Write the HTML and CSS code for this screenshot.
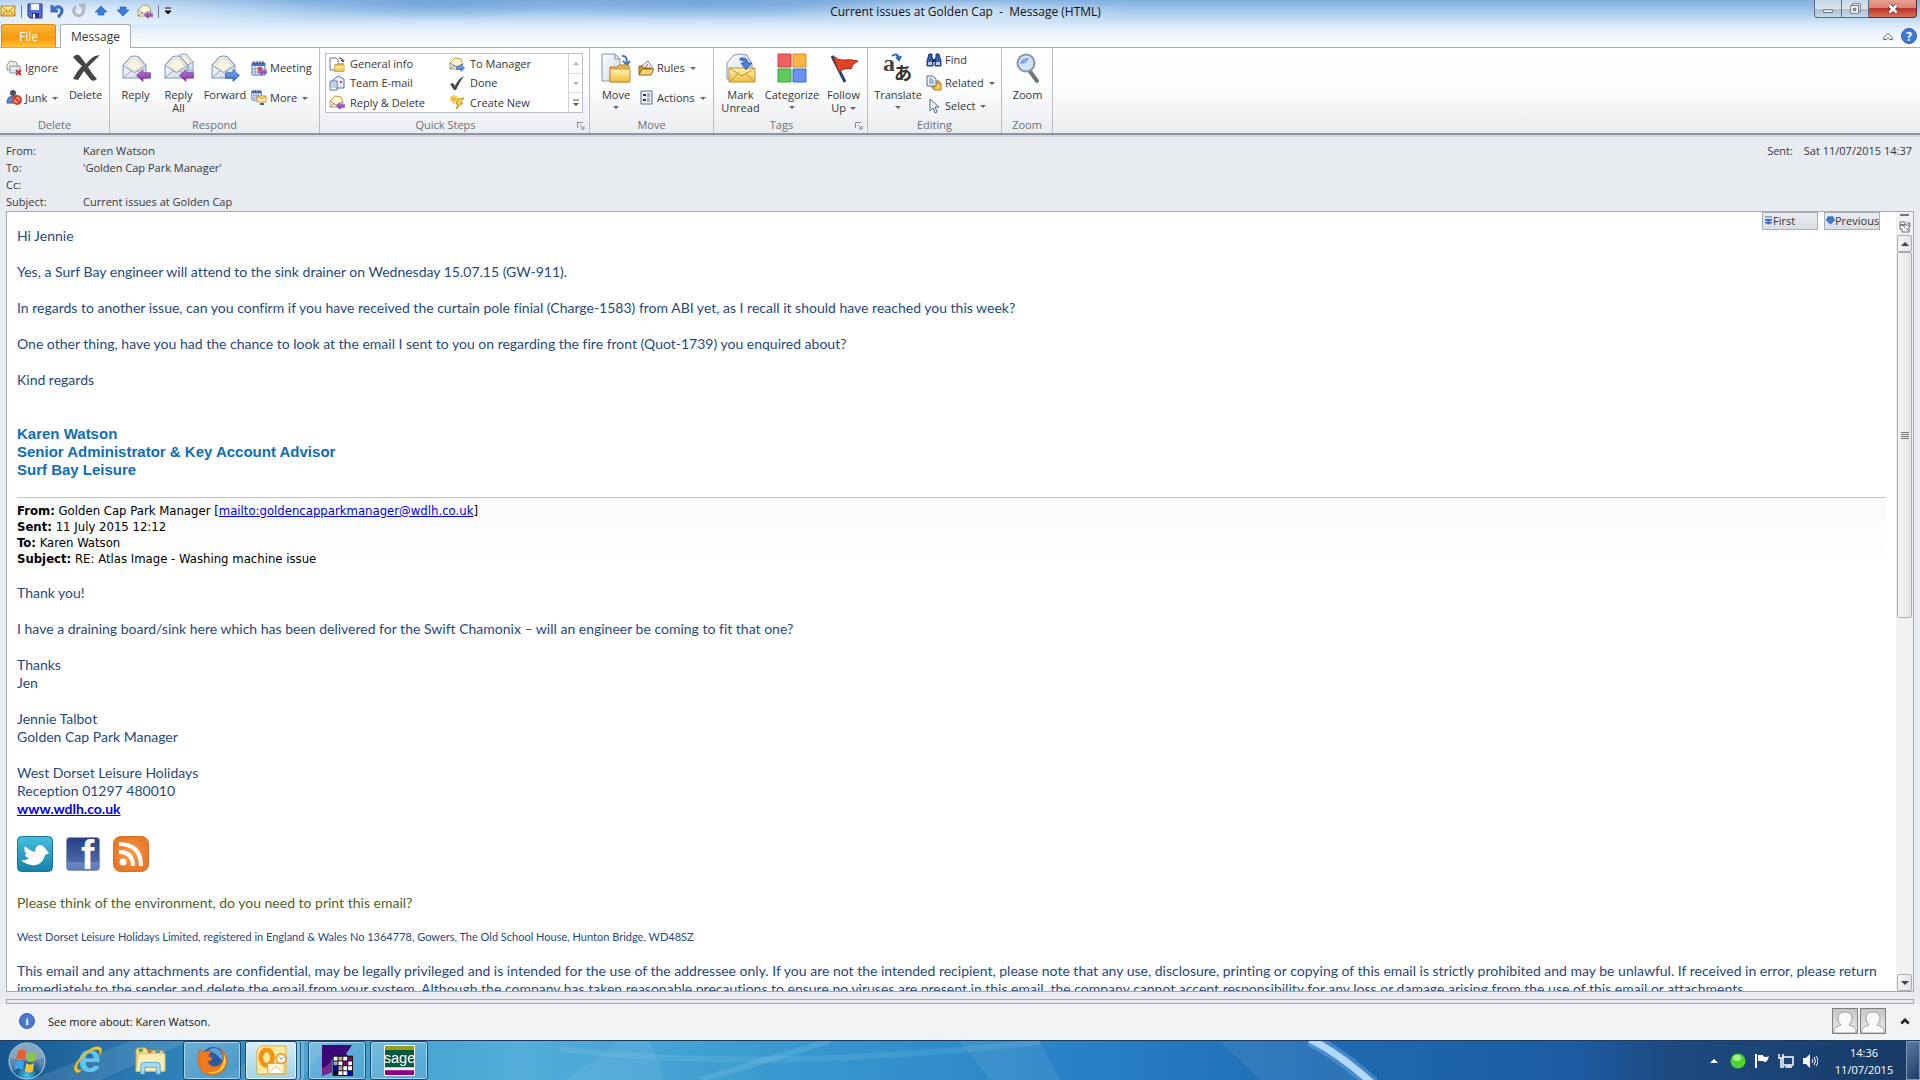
FILE: index.html
```html
<!DOCTYPE html>
<html lang="en">
    <head>
        <meta charset="UTF-8" />
        <title>Current issues at Golden Cap - Message (HTML)</title>
        <link rel="stylesheet" href="styles.css">
    </head>
    <body>
        <svg class="sprite" aria-hidden="true">
            <defs>
                <linearGradient id="g-gold" x1="0" y1="0" x2="0" y2="1">
                    <stop offset="0" stop-color="#fff3b0" />
                    <stop offset="1" stop-color="#f0bc3c" />
                </linearGradient>
                <linearGradient id="g-paper" x1="0" y1="0" x2="1" y2="1">
                    <stop offset="0" stop-color="#ffffff" />
                    <stop offset="1" stop-color="#c9d6ea" />
                </linearGradient>
                <linearGradient id="g-purple" x1="0" y1="0" x2="0" y2="1">
                    <stop offset="0" stop-color="#c77be0" />
                    <stop offset="1" stop-color="#7d2aa3" />
                </linearGradient>
                <linearGradient id="g-blue" x1="0" y1="0" x2="0" y2="1">
                    <stop offset="0" stop-color="#8dbcf7" />
                    <stop offset="1" stop-color="#2b5fc4" />
                </linearGradient>
            </defs>
            <symbol id="open-envelope" viewBox="0 0 24 24">
                <path d="M1 10 8 2q4-2 8 0l7 8v12H1z" fill="url(#g-paper)" stroke="#8494ae" />
                <path d="M4 11 9 4q3-1 6 0l5 7-8 5z" fill="#f7f3df" stroke="#c8c6b4" stroke-width=".6" />
                <path d="m1 10 11 7 11-7M1 22l8-7m14 7-8-7" fill="none" stroke="#8494ae" stroke-width=".8" />
            </symbol>
            <symbol id="arrow-left" viewBox="0 0 14 12">
                <path d="M.5 6 6.500.5V3.500h7v5h-7v3z" fill="url(#g-purple)" stroke="#7b3a9c" stroke-width=".7" />
            </symbol>
            <symbol id="arrow-right" viewBox="0 0 14 12">
                <path d="M13.500 6 7.500.5V3.500h-7v5h7v3z" fill="url(#g-blue)" stroke="#2c559e" stroke-width=".7" />
            </symbol>
            <symbol id="folder" viewBox="0 0 22 19">
                <path d="M1 18V3h7l2-2h10v17z" fill="#e8b24b" stroke="#b98428" />
                <path d="M1 5h20v13H1z" fill="url(#g-gold)" stroke="#c4913a" />
            </symbol>
            <symbol id="i-reply-small" viewBox="0 0 16 16">
                <path d="m1 7 5-5 6 1 2 5-1 5H1z" fill="#fff6d4" stroke="#c29a3c" />
                <path d="m1 7 6 4 7-3M1 13l5-4" fill="none" stroke="#7d8db5" />
                <use href="#arrow-left" x="7" y="8" width="9" height="8" />
            </symbol>
            <symbol id="i-calendar" viewBox="0 0 16 16">
                <path d="M1 3h13v12H1z" fill="#fff" stroke="#4d6cae" />
                <path d="M1 3h13v3H1z" fill="#4a71c4" />
                <path d="M4 6v9m3-9v9m3-9v9M1 9h13M1 12h13" stroke="#7890c4" />
                <path d="M3 1v3m3-3v3m3-3v3m3-3v3" stroke="#223f82" />
            </symbol>
            <symbol id="i-person" viewBox="0 0 24 24">
                <path d="M1 24v-3q0-3 7-5-4-4-3-8 1-5 7-5t7 5q1 4-3 8 7 2 7 5v3z" fill="#fafafa" stroke="#a0a0a0" />
            </symbol>
        </svg>

        <header class="titlebar">
            <div class="quick-access">
                <svg viewBox="0 0 16 16"><path d="M1 3h14v10H1z" fill="url(#g-gold)" stroke="#b98a20" /><path d="m1 3 7 6 7-6M1 13l5-5m9 5-5-5" fill="none" stroke="#b98a20" /></svg>
                <span class="divider"></span>
                <button aria-label="Save"><svg viewBox="0 0 16 16"><path d="M1 1h14v14H3l-2-2z" fill="#5b6fd0" stroke="#26358c" /><path d="M4 1h8v6H4z" fill="#f4f7ff" /><path d="M5 10h7v5H5z" fill="#26358c" /><path d="M6 11h2v4H6z" fill="#fff" /></svg></button>
                <button aria-label="Undo"><svg viewBox="0 0 16 16"><path d="M3 2v6h6M4 7q4-5 8-2 3 4-3 9" fill="none" stroke="#3e6dc6" stroke-width="3" /></svg></button>
                <button aria-label="Redo"><svg viewBox="0 0 16 16"><path d="M5 3q-4 4-1 8 5 4 8-1 1-4-1-7M8 2h5v5" fill="none" stroke="#b4b8bf" stroke-width="3" /></svg></button>
                <button aria-label="Previous item"><svg viewBox="0 0 16 16"><path d="m8 3 6 6h-3v3H5V9H2z" fill="#3b7be0" stroke="#2458b4" stroke-width=".6" /></svg></button>
                <button aria-label="Next item"><svg viewBox="0 0 16 16"><path d="m8 13 6-6h-3V4H5v3H2z" fill="#3b7be0" stroke="#2458b4" stroke-width=".6" /></svg></button>
                <button aria-label="Reply and delete"><svg viewBox="0 0 16 16"><use href="#i-reply-small" /></svg></button>
                <span class="divider"></span>
                <button class="customise" aria-label="Customise"><svg viewBox="0 0 8 8"><path d="M1 1h6M1 4h6L4 7z" stroke="#111" /></svg></button>
            </div>
            <h1>Current issues at Golden Cap&nbsp; -&nbsp; Message (HTML)</h1>
            <div class="window-buttons">
                <button aria-label="Minimise"><svg viewBox="0 0 16 16"><path d="M3 9h10v3H3z" fill="#fff" stroke="#5a6577" /></svg></button>
                <button aria-label="Restore"><svg viewBox="0 0 16 16"><path d="M5 2h9v9H5z" fill="#fff" stroke="#5a6577" /><path d="M3 4h9v9H3z" fill="#fff" stroke="#5a6577" /><path d="M6 7h3v3H6z" fill="#9cabc0" stroke="#5a6577" /></svg></button>
                <button class="close" aria-label="Close"><svg viewBox="0 0 16 16"><path d="m4 4 8 8m0-8-8 8" stroke="#5b3a3e" stroke-width="5" /><path d="m4 4 8 8m0-8-8 8" stroke="#fff" stroke-width="3" /></svg></button>
            </div>
        </header>

        <nav class="tabs">
            <button class="tab tab-file">File</button>
            <button class="tab tab-active">Message</button>
            <span class="tab-tools">
                <button aria-label="Minimise the ribbon"><svg viewBox="0 0 16 16"><path d="m3 10 5-5 5 5v2h-3L8 10l-2 2H3z" fill="#fff" stroke="#444b57" /></svg></button>
                <button aria-label="Help"><svg viewBox="0 0 16 16"><circle cx="8" cy="8" r="7.500" fill="#4079d4" stroke="#2a5db4" /><text x="8" y="12.500" class="help-mark">?</text></svg></button>
            </span>
        </nav>

        <section class="ribbon">
            <div class="group group-delete">
                <div class="tools">
                    <div class="stack">
                        <button class="small"><svg viewBox="0 0 16 16"><path d="M1 5 4 1l6 1 2 4v4H1z" fill="#f5efcf" stroke="#8a93a5" /><path d="M4 6h10v7H4z" fill="#dfe7f2" stroke="#8a93a5" /><path d="m10 10 5 5m0-5-5 5" stroke="#dc3027" stroke-width="2" /></svg>Ignore</button>
                        <button class="small"><svg viewBox="0 0 16 16"><circle cx="7" cy="4" r="3" fill="#4d5260" /><path d="M1 14q0-7 6-7t5 7z" fill="#5b88d4" stroke="#34599c" /><circle cx="11" cy="11" r="4" fill="#f0a090" stroke="#d63b20" stroke-width="2" /><path d="m8 8 6 6" stroke="#d63b20" stroke-width="2" /></svg>Junk<i class="caret"></i></button>
                    </div>
                    <button class="big"><svg viewBox="0 0 30 30"><path d="M2 4q4-4 7-1l6 8q5-6 9-8l5-1q-6 6-12 12 4 7 9 12-3 3-6 1l-7-9q-4 6-6 9l-5-1q4-8 9-13Q6 9 2 4z" fill="#454545" /></svg>Delete</button>
                </div>
                <h2>Delete</h2>
            </div>

            <div class="group group-respond">
                <div class="tools">
                    <button class="big"><svg viewBox="0 0 30 30"><use href="#open-envelope" x="1" y="2" width="25" height="25" /><use href="#arrow-left" x="15" y="16" width="15" height="13" /></svg>Reply</button>
                    <button class="big"><svg viewBox="0 0 30 30"><use href="#open-envelope" x="9" y="0" width="21" height="21" /><use href="#open-envelope" x="0" y="2" width="25" height="25" /><use href="#arrow-left" x="15" y="16" width="15" height="13" /></svg>Reply<br>All</button>
                    <button class="big forward"><svg viewBox="0 0 30 30"><use href="#open-envelope" x="1" y="2" width="25" height="25" /><use href="#arrow-right" x="15" y="16" width="15" height="13" /></svg>Forward</button>
                    <div class="stack">
                        <button class="small"><svg viewBox="0 0 16 16"><use href="#i-calendar" /><path d="M7 7h4v4H7z" fill="#e04545" /><use href="#arrow-left" x="7" y="8" width="9" height="8" /></svg>Meeting</button>
                        <button class="small"><svg viewBox="0 0 16 16"><use href="#i-calendar" width="12" height="12" /><path d="M6 7h9v6H6z" fill="#ffe9a0" stroke="#c29a3c" /><path d="m6 7 5 3 4-3" fill="none" stroke="#c29a3c" /><path d="M9 15h4" stroke="#2b5fc4" stroke-width="2" /></svg>More<i class="caret"></i></button>
                    </div>
                </div>
                <h2>Respond</h2>
            </div>

            <div class="group group-steps">
                <div class="gallery">
                    <div class="gallery-list">
                        <button class="small"><svg viewBox="0 0 16 16"><path d="M1 2h6l2 2v10H1z" fill="#fff" stroke="#64748f" /><path d="M10 2q4 0 4 3m-2-1 2 2 1-2" fill="none" stroke="#333" /><use href="#folder" x="5" y="7" width="11" height="9" /></svg>General info</button>
                        <button class="small"><svg viewBox="0 0 16 16"><path d="m1 7 5-5 6 1 2 5-1 5H1z" fill="#fff6d4" stroke="#c29a3c" /><path d="m1 7 6 4 7-3M1 13l5-4" fill="none" stroke="#5f7fc4" /><use href="#arrow-right" x="7" y="8" width="9" height="8" /></svg>To Manager</button>
                        <button class="small"><svg viewBox="0 0 16 16"><path d="m4 5 5-4 6 3v9H4z" fill="#e3ecf8" stroke="#51709f" /><path d="M1 6h7v9H1z" fill="#fff" stroke="#51709f" /><path d="M2 8h5M2 10h5M2 12h5" stroke="#8aa3cc" /><path d="M11 6h2v2h-2z" fill="#d33" /></svg>Team E-mail</button>
                        <button class="small"><svg viewBox="0 0 16 16"><path d="m1 9 3-1 2 3q3-7 9-10-5 7-8 14H5z" fill="#484848" /></svg>Done</button>
                        <button class="small"><svg viewBox="0 0 16 16"><use href="#i-reply-small" /></svg>Reply &amp; Delete</button>
                        <button class="small"><svg viewBox="0 0 16 16"><path d="M5 1v9M1 5h9M2 2l6 6m0-6L2 8" stroke="#f0bd2c" stroke-width="1.500" /><path d="m9 5 6-1-4 5h3l-7 6 2-5H7z" fill="#ffd34a" stroke="#a8781a" stroke-width=".7" /></svg>Create New</button>
                    </div>
                    <div class="gallery-scroll">
                        <button class="off" aria-label="Scroll up"><i class="caret up"></i></button>
                        <button class="off" aria-label="Scroll down"><i class="caret"></i></button>
                        <button aria-label="More quick steps"><svg viewBox="0 0 8 8"><path d="M1 1h6" stroke="#555" /><path d="M1 4h6L4 7z" fill="#555" /></svg></button>
                    </div>
                </div>
                <h2>Quick Steps</h2>
                <button class="launcher" aria-label="Quick Steps options"><svg viewBox="0 0 8 8"><path d="M.5 6V.5H6M3 3l4 4m0-3v3H4" fill="none" stroke="#858b94" /></svg></button>
            </div>

            <div class="group group-move">
                <div class="tools">
                    <button class="big"><svg viewBox="0 0 30 30"><path d="M1 1h13l5 5v22H1z" fill="url(#g-paper)" stroke="#8494ae" /><path d="M14 1v5h5" fill="none" stroke="#8494ae" /><path d="M21 3q5-1 5 7m-4-2 4 4 3-4" fill="none" stroke="#3e6fca" stroke-width="2" /><use href="#folder" x="8" y="11" width="22" height="19" /></svg>Move<i class="caret"></i></button>
                    <div class="stack">
                        <button class="small"><svg viewBox="0 0 16 16"><path d="m4 6 6-5 4 6v5H4z" fill="#eef1f8" stroke="#7683a0" /><path d="m7 8 3-4" stroke="#d33" /><path d="M1 6h3l1 2h8v6H1z" fill="#d99c2a" stroke="#8d6212" /><path d="m4 9h12l-3 6H1z" fill="#ffd670" stroke="#8d6212" /></svg>Rules<i class="caret"></i></button>
                        <button class="small"><svg viewBox="0 0 16 16"><path d="M3 2h11v13H3z" fill="#eef3fb" stroke="#5a6d8f" /><path d="M5 5h3v2H5zm0 5h3v2H5z" fill="#333" /><path d="M9 5h3M9 7h3M9 10h3M9 12h3" stroke="#5a6d8f" /></svg>Actions<i class="caret"></i></button>
                    </div>
                </div>
                <h2>Move</h2>
            </div>

            <div class="group group-tags">
                <div class="tools">
                    <button class="big"><svg viewBox="0 0 30 30"><path d="M1 10 8 2q7-2 13 0l5 9v15H1z" fill="url(#g-paper)" stroke="#8494ae" /><path d="M3 15h26v14H3z" fill="url(#g-gold)" stroke="#c09334" /><path d="m3 15 13 8 13-8M3 29l9-8m17 8-9-8" fill="none" stroke="#c09334" /><path d="M14 5q8-1 8 5h4l-6 7-5-7h3q0-3-4-3z" fill="#4a7ede" stroke="#2c559e" stroke-width=".7" /></svg>Mark<br>Unread</button>
                    <button class="big categorize"><svg viewBox="0 0 30 30"><path d="M1 1h13v13H1z" fill="#ef6164" stroke="#c94145" /><path d="M16 1h13v13H16z" fill="#fbb546" stroke="#d48c22" /><path d="M1 16h13v13H1z" fill="#5fcb5b" stroke="#3ba03a" /><path d="M16 16h13v13H16z" fill="#6a92f2" stroke="#4369c8" /></svg>Categorize<i class="caret"></i></button>
                    <button class="big"><svg viewBox="0 0 30 30"><path d="m3 3 13 26" stroke="#23407c" stroke-width="3" /><path d="M4 3q6 5 11 4 6-1 14 1-6 3-7 8-6-2-12 3z" fill="#e24325" stroke="#a82a14" /></svg>Follow<span>Up<i class="caret"></i></span></button>
                </div>
                <h2>Tags</h2>
                <button class="launcher" aria-label="Tag options"><svg viewBox="0 0 8 8"><path d="M.5 6V.5H6M3 3l4 4m0-3v3H4" fill="none" stroke="#858b94" /></svg></button>
            </div>

            <div class="group group-editing">
                <div class="tools">
                    <button class="big"><svg viewBox="0 0 30 30"><text x="0" y="18" class="glyph-latin">a</text><text x="11" y="27" class="glyph-kana">あ</text><path d="M9 3q5-4 7 2m-3-1 3 3 2-4" fill="none" stroke="#3566c4" stroke-width="2" /></svg>Translate<i class="caret"></i></button>
                    <div class="stack">
                        <button class="small"><svg viewBox="0 0 16 16"><path d="M3 2h3v3l1 2v7H1V9zm7 0h3l2 7v5H9V7l1-2z" fill="#345ca8" stroke="#1d3870" /><path d="M2 10h4v3H2zm8 0h4v3h-4z" fill="#b9cdf0" /><path d="M6 7h4v3H6z" fill="#1d3870" /></svg>Find</button>
                        <button class="small"><svg viewBox="0 0 16 16"><path d="M6 6h7v7H6z" fill="#ffe08a" stroke="#a8781a" /><path d="M8 8h7v7H8z" fill="#ffc94a" stroke="#a8781a" /><path d="M1 1h6l3 3v7H1z" fill="#eef3fb" stroke="#5a6d8f" /><path d="M3 4h4M3 6h5M3 8h5" stroke="#5a7cc0" /></svg>Related<i class="caret"></i></button>
                        <button class="small"><svg viewBox="0 0 16 16"><path d="M4 1v12l3-3 2 5 2-1-2-5h4z" fill="#f5f8fd" stroke="#50648c" /></svg>Select<i class="caret"></i></button>
                    </div>
                </div>
                <h2>Editing</h2>
            </div>

            <div class="group group-zoom">
                <div class="tools">
                    <button class="big"><svg viewBox="0 0 30 30"><path d="m16 17 8 11" stroke="#777" stroke-width="4" stroke-linecap="round" /><circle cx="13" cy="10" r="8.500" fill="#cfe2f8" stroke="#8b97a8" stroke-width="2" /><path d="M7 11q1-7 9-6-2 6-9 6z" fill="#7fabe4" /></svg>Zoom</button>
                </div>
                <h2>Zoom</h2>
            </div>
        </section>

        <section class="envelope">
            <dl>
                <dt>From:</dt><dd>Karen Watson</dd>
                <dt>To:</dt><dd>'Golden Cap Park Manager'</dd>
                <dt>Cc:</dt><dd></dd>
                <dt>Subject:</dt><dd>Current issues at Golden Cap</dd>
            </dl>
            <p class="sent"><span>Sent:</span> Sat 11/07/2015 14:37</p>
        </section>

        <main class="message">
            <article class="mail">
                <p>Hi Jennie</p>
                <p>Yes, a Surf Bay engineer will attend to the sink drainer on Wednesday 15.07.15 (GW-911).</p>
                <p>In regards to another issue, can you confirm if you have received the curtain pole finial (Charge-1583) from ABI yet, as I recall it should have reached you this week?</p>
                <p>One other thing, have you had the chance to look at the email I sent to you on regarding the fire front (Quot-1739) you enquired about?</p>
                <p>Kind regards</p>
                <p class="signature">Karen Watson<br>Senior Administrator &amp; Key Account Advisor<br>Surf Bay Leisure</p>

                <div class="quoted-header">
                    <b>From:</b> Golden Cap Park Manager [<a href="mailto:goldencapparkmanager@wdlh.co.uk">mailto:goldencapparkmanager@wdlh.co.uk</a>]<br>
                    <b>Sent:</b> 11 July 2015 12:12<br>
                    <b>To:</b> Karen Watson<br>
                    <b>Subject:</b> RE: Atlas Image - Washing machine issue
                </div>

                <p>Thank you!</p>
                <p>I have a draining board/sink here which has been delivered for the Swift Chamonix – will an engineer be coming to fit that one?</p>
                <p>Thanks<br>Jen</p>
                <p>Jennie Talbot<br>Golden Cap Park Manager</p>
                <p>West Dorset Leisure Holidays<br>Reception 01297 480010<br><a class="site" href="http://www.wdlh.co.uk">www.wdlh.co.uk</a></p>

                <div class="social">
                    <a href="#twitter" aria-label="Twitter"><svg viewBox="0 0 36 36">
                        <defs><linearGradient id="g-tw" x1="0" y1="0" x2="0" y2="1"><stop offset="0" stop-color="#45bede" /><stop offset="1" stop-color="#1781ab" /></linearGradient></defs>
                        <rect x=".5" y=".5" width="35" height="35" rx="4" fill="url(#g-tw)" stroke="#1b7697" />
                        <path d="M4 24q5 1 8-2-4-1-4-4h2q-4-3-2-8 5 5 10 6 0-6 5-7 3 0 5 3l3 4 1 1-4 2q-2 8-9 10-9 1-15-5z" fill="#fff" />
                    </svg></a>
                    <a href="#facebook" aria-label="Facebook"><svg viewBox="0 0 36 36">
                        <defs><linearGradient id="g-fb" x1="0" y1="0" x2="0" y2="1"><stop offset="0" stop-color="#243f80" /><stop offset=".75" stop-color="#4a6bab" /><stop offset=".76" stop-color="#6b89c0" /><stop offset="1" stop-color="#5878b4" /></linearGradient></defs>
                        <rect x="1.500" y="1.500" width="33" height="33" rx="3" fill="url(#g-fb)" stroke="#8b9bbd" />
                        <text x="16" y="33" class="fb-mark">f</text>
                    </svg></a>
                    <a href="#rss" aria-label="RSS"><svg viewBox="0 0 36 36">
                        <defs><radialGradient id="g-rss"><stop offset="0" stop-color="#f9a248" /><stop offset="1" stop-color="#e8772a" /></radialGradient></defs>
                        <rect x=".5" y=".5" width="35" height="35" rx="7" fill="url(#g-rss)" stroke="#d8702a" />
                        <circle cx="10" cy="26" r="3.500" fill="#fff" />
                        <path d="M6 16q14 0 14 14M6 8q22 0 22 22" fill="none" stroke="#fff" stroke-width="4" />
                    </svg></a>
                </div>

                <p class="green">Please think of the environment, do you need to print this email?</p>
                <p class="company">West Dorset Leisure Holidays Limited, registered in England &amp; Wales No 1364778, Gowers, The Old School House, Hunton Bridge, WD48SZ</p>
                <p>This email and any attachments are confidential, may be legally privileged and is intended for the use of the addressee only. If you are not the intended recipient, please note that any use, disclosure, printing or copying of this email is strictly prohibited and may be unlawful. If received in error, please return immediately to the sender and delete the email from your system. Although the company has taken reasonable precautions to ensure no viruses are present in this email, the company cannot accept responsibility for any loss or damage arising from the use of this email or attachments.</p>
            </article>
            <div class="jump">
                <button><svg viewBox="0 0 10 10"><path d="M1 1h8M1 4h8L5 6zM1 7h8L5 9z" fill="#3566c4" stroke="#3566c4" /></svg>First</button>
                <button><svg viewBox="0 0 10 10"><path d="M0 4h2V1h6v3h2L5 9z" fill="#3b78dc" stroke="#2a5db4" /></svg>Previous</button>
            </div>
            <div class="scrollbar">
                <span class="split"></span>
                <svg class="page-mark" viewBox="0 0 14 14"><path d="M2 2h5v3H2zm0 3h9v7H4V9H2z" fill="#fff" stroke="#666c78" /><path d="m4 4 3 4m1 0 3 3M9 3h3v4" fill="none" stroke="#666c78" /></svg>
                <button aria-label="Scroll up"><svg viewBox="0 0 8 8"><path d="M0 6h8L4 2z" fill="#3a4258" /></svg></button>
                <span class="thumb"><i></i></span>
                <span class="track"></span>
                <button aria-label="Scroll down"><svg viewBox="0 0 8 8"><path d="M0 2h8L4 6z" fill="#3a4258" /></svg></button>
            </div>
        </main>
        <div class="splitter"></div>

        <section class="people">
            <svg viewBox="0 0 16 16"><circle cx="8" cy="8" r="7.500" fill="#4a78d0" stroke="#3560b4" /><text x="8" y="12" class="info-mark">i</text></svg>
            <p>See more about: Karen Watson.</p>
            <span class="faces">
                <svg viewBox="0 0 24 24"><use href="#i-person" /></svg>
                <svg viewBox="0 0 24 24"><use href="#i-person" /></svg>
            </span>
            <button aria-label="Expand"><svg viewBox="0 0 8 8"><path d="m1 6 3-3 3 3" fill="none" stroke="#222" stroke-width="2" /></svg></button>
        </section>

        <footer class="taskbar">
            <svg class="streaks" viewBox="0 0 1920 39" preserveAspectRatio="none">
                <path d="M130 0h60L100 39H30zM280 0h50l-30 39h-80z" fill="#fff" opacity=".1" />
                <path d="M620 0h30l15 39h-100zM960 0h80l20 39h-70zM1220 0h90l50 39h-100z" fill="#fff" opacity=".07" />
                <path d="M560 8q200 24 480-7" fill="none" stroke="#9fd8f2" stroke-width="6" opacity=".15" />
                <path d="M700 39 830 0" stroke="#9fd8f2" stroke-width="6" opacity=".2" />
                <path d="M1310-2q30 15 63 45" fill="none" stroke="#7db8f0" stroke-width="14" opacity=".4" />
                <path d="M1310-2q30 15 63 45" fill="none" stroke="#b4d8fc" stroke-width="7" />
            </svg>
            <button class="start" aria-label="Start"><svg viewBox="0 0 38 38">
                <defs><radialGradient id="g-orb" cy=".9"><stop offset="0" stop-color="#45c8ea" /><stop offset=".6" stop-color="#175a8c" /><stop offset="1" stop-color="#5f88ab" /></radialGradient></defs>
                <circle cx="19" cy="19" r="18" fill="url(#g-orb)" stroke="#b9d4e6" />
                <path d="M2 16Q5 2 19 2t17 14q-17 5-34 0z" fill="#fff" opacity=".25" />
                <path d="M10 9q4-3 8 0l-1 9q-4-3-9 0z" fill="#ee5a28" /><path d="M20 10q4 3 9 0l-2 9q-4 2-8 0z" fill="#8cc63f" />
                <path d="M8 20q4-3 8 0l-1 8q-4-3-9 0z" fill="#40a4e8" /><path d="M18 21q4 3 8 0l-1 8q-4 3-8 0z" fill="#fcc42c" />
            </svg></button>
            <button class="pin" aria-label="Internet Explorer"><svg viewBox="0 0 32 32"><text x="17" y="28" class="ie-mark">e</text><path d="M5 29Q-4 25 9 11 23-2 29 3q2 2-2 9 2-7-2-7Q18 4 9 14-1 26 9 26z" fill="#f7c928" stroke="#c79518" stroke-width=".5" /></svg></button>
            <button class="pin" aria-label="Explorer"><svg viewBox="0 0 32 32"><path d="M1 6q0-3 3-3h7l2 3h16v21H1z" fill="#f3dd8c" stroke="#c9a44a" /><path d="M4 4h4v3H4z" fill="#38a838" /><path d="M13 6h4v2h-4z" fill="#e05030" /><path d="M21 6h5v2h-5z" fill="#3e86d8" /><path d="M3 9h28v18H1z" fill="#fbeeb2" stroke="#d9bb66" /><path d="M6 30V21q0-3 3-3h14q3 0 3 3v9h-4v-7H10v7z" fill="#a5daf3" stroke="#5ba6cf" /></svg></button>
            <button class="task" aria-label="Firefox"><svg viewBox="0 0 32 32"><circle cx="17" cy="14" r="12" fill="#285ba5" /><path d="M12 5q7-4 12 1 4 5 2 10l-7-7z" fill="#5aa4dc" /><path d="M3 4q2 3 5 3 4-2 7 0-3 2-3 5l4 1q-1 4-5 4 3 6 9 5 7-2 7-9 0-5-3-9 8 5 7 14-2 12-14 13Q3 31 1 18 1 9 3 4z" fill="#ee7a1d" stroke="#c9501a" stroke-width=".5" /><path d="M28 10q4 9-2 15-8 7-16 3 18 2 18-18z" fill="#ffd43c" /></svg></button>
            <button class="task current" aria-label="Outlook"><svg viewBox="0 0 32 32"><path d="M5 1h26v29H1V5z" fill="#fde9a4" stroke="#f0a81f" /><ellipse cx="11" cy="13" rx="6" ry="8" fill="none" stroke="#ee9412" stroke-width="5" /><path d="M12 19h17v10H12z" fill="#fff8df" stroke="#dba43c" /><path d="m12 29 9-7 8 7" fill="#fff" stroke="#e9bd62" /><circle cx="26" cy="14" r="5" fill="#fff" stroke="#e8a23c" stroke-width="2" /><path d="M24 12l2 3 3-3" fill="none" stroke="#888" /></svg></button>
            <button class="task" aria-label="Reservations"><svg viewBox="0 0 32 32"><path d="M0 0h31l-6 9 2 3-17 3v13L0 32z" fill="#3a0878" /><path d="M0 24q6-2 10-9v13L0 32z" fill="#78288c" /><path d="M11 11h21v21H11z" fill="#111" /><path d="M12 12h4v4h-4zm10 0h4v4h-4zm-5 5h4v4h-4zm10 0h4v4h-4zm-5 5h4v4h-4zm5 0h4v4h-4zm-10 5h4v4h-4zm5 0h4v4h-4z" fill="#fff" /><path d="M17 12h4v4h-4zm-5 5h4v4h-4zm5 5h4v4h-4z" fill="#aaa" /><path d="M27 12h4v4h-4zm-5 5h4v4h-4z" fill="#800080" /><path d="M12 22h4v4h-4zm15 5h4v4h-4z" fill="#00c" /></svg></button>
            <button class="task" aria-label="Sage"><svg viewBox="0 0 32 32"><path d="M0 0h32v32H0z" fill="#fff" /><path d="M1 1h30v4H1z" fill="#9c9c14" /><path d="M1 5h30v18H1z" fill="#07583f" /><path d="M1 26h30v5H1z" fill="#8c008c" /><text x="16" y="19" class="sage-mark">sage</text></svg></button>

            <div class="tray">
                <button aria-label="Show hidden icons"><svg viewBox="0 0 16 16"><path d="M4 10h8L8 6z" fill="#fff" /></svg></button>
                <svg viewBox="0 0 16 16"><circle cx="8" cy="8" r="7.500" fill="#4fd42e" /><ellipse cx="7" cy="5" rx="4" ry="3" fill="#a7f08c" /></svg>
                <svg viewBox="0 0 16 16"><path d="M2 1v14" stroke="#fff" stroke-width="2" /><path d="M4 2h5v1q3 2 6 0-1 4-3 6l-4-1H4z" fill="#fff" /></svg>
                <svg viewBox="0 0 16 16"><path d="M5 4h10v8H5zM7 14h7m-3-2v2M1 1v4h4V1M3 5v9h3" fill="none" stroke="#fff" stroke-width="1.500" /></svg>
                <svg viewBox="0 0 16 16"><path d="M1 5h3l4-4v14l-4-4H1z" fill="#fff" /><path d="M10 6q2 2 0 4m2-6q3 4 0 8m2-9q4 5 0 10" fill="none" stroke="#fff" /></svg>
            </div>
            <p class="clock">14:36<br>11/07/2015</p>
            <button class="desktop" aria-label="Show desktop"></button>
        </footer>
    </body>
</html>
```
FILE: styles.css
```css
* {
    box-sizing: border-box;
}

body {
    margin: 0;
    height: 100vh;
    display: flex;
    flex-direction: column;
    overflow: hidden;
    font: 11px/17px 'Open Sans', 'Noto Sans', sans-serif;
    color: #33373d;
    background: #e8ebf0;
}

h1, h2, p, dl, dd {
    margin: 0;
    font-weight: normal;
}

button {
    display: flex;
    align-items: center;
    justify-content: center;
    padding: 0;
    border: 0;
    background: none;
    font: inherit;
    color: inherit;
}

svg {
    display: block;
    flex: none;
    width: 16px;
    height: 16px;
}

.sprite {
    position: absolute;
    width: 0;
    height: 0;
}

.caret {
    width: 0;
    height: 0;
    margin: 2px 0 0 4px;
    border: 3px solid transparent;
    border-top-color: #666;
    border-bottom: 0;
}

.caret.up {
    border-top: 0;
    border-bottom: 3px solid #666;
}

/* title bar and tabs */

.titlebar {
    display: flex;
    align-items: flex-start;
    height: 24px;
    background:
        radial-gradient(ellipse 260px 34px at 60px 14px, #f2f8ffdd, transparent),
        radial-gradient(ellipse 140px 16px at 440px 4px, #5f97d088, transparent),
        radial-gradient(ellipse 240px 16px at 700px 4px, #5f97d077, transparent),
        radial-gradient(ellipse 180px 14px at 960px 12px, #ffffff77, transparent),
        linear-gradient(#80b0e0, #b0d0f0 60%, #d5e6f8);
}

.quick-access {
    flex: 1;
    display: flex;
    align-items: center;
    gap: 6px;
    height: 22px;
}

.quick-access .divider {
    width: 1px;
    height: 13px;
    margin: 0 -1px;
    background: #6f7f94;
}

.customise svg {
    width: 8px;
    height: 8px;
}

.titlebar h1 {
    margin-left: 14px;
    font-size: 12px;
    line-height: 24px;
    color: #111;
}

.window-buttons {
    flex: 1;
    display: flex;
    justify-content: flex-end;
    padding-right: 3px;
}

.window-buttons button {
    width: 27px;
    height: 18px;
    border: 1px solid #5d6e85;
    border-top: 0;
    border-left-width: 0;
    background: linear-gradient(#c8d6e6, #dbe5f0 50%, #a9bbd0 51%, #cddbea);
}

.window-buttons button:first-child {
    width: 28px;
    border-left-width: 1px;
    border-radius: 0 0 0 4px;
}

.window-buttons .close {
    width: 48px;
    border-color: #5e2a2e;
    border-radius: 0 0 4px;
    background: linear-gradient(#e8a090, #d98476 45%, #bb3427 50%, #d8705c);
}

.window-buttons svg {
    width: 14px;
    height: 14px;
}

.tabs {
    display: flex;
    align-items: flex-end;
    gap: 4px;
    height: 24px;
    padding-left: 1px;
    border-bottom: 1px solid #a7acb5;
    background: linear-gradient(#d5e6f8, #f0f7fe 50%, #fff);
}

.tab {
    height: 23px;
    font-size: 12px;
}

.tab-file {
    width: 55px;
    border: 1px solid #d98a12;
    border-bottom: 0;
    border-radius: 3px 3px 0 0;
    background: linear-gradient(#fcb53a, #f59a0c 60%, #ffc435);
    color: #fff;
}

.tab-active {
    width: 71px;
    height: 24px;
    margin-bottom: -1px;
    border: 1px solid #a7acb5;
    border-bottom: 0;
    border-radius: 3px 3px 0 0;
    background: #fff;
}

.tab-tools {
    display: flex;
    gap: 6px;
    align-self: center;
    margin: 0 3px 0 auto;
}

.tab-tools button:first-child svg {
    width: 14px;
}

.help-mark {
    font: bold 12px 'Open Sans', sans-serif;
    text-anchor: middle;
    fill: #fff;
}

/* ribbon */

.ribbon {
    display: flex;
    height: 87px;
    border-bottom: 2px solid #8f959e;
    background: linear-gradient(#fff, #fbfcfc 50%, #e9ecf0);
}

.group {
    position: relative;
    display: flex;
    flex-direction: column;
    justify-content: space-between;
    border-right: 1px solid #b9bdc4;
}

.group h2 {
    padding-bottom: 1px;
    font-size: 11px;
    line-height: 15px;
    text-align: center;
    color: #6b7078;
}

.group-delete { width: 110px; }
.group-respond { width: 210px; }
.group-steps { width: 270px; }
.group-move { width: 124px; }
.group-tags { width: 154px; }
.group-editing { width: 134px; }
.group-zoom { width: 51px; }

.group-steps h2 {
    padding-right: 18px;
}

.group-tags h2 {
    padding-right: 18px;
}

.tools {
    display: flex;
    height: 69px;
    padding: 5px 0 0 4px;
}

.group-delete .tools,
.group-editing .tools {
    padding-left: 6px;
}

.stack {
    display: flex;
    flex-direction: column;
    justify-content: space-around;
    padding-bottom: 5px;
    width: 58px;
}

.group-editing .stack {
    justify-content: space-between;
    margin-top: -2px;
    padding-bottom: 3px;
}

.small {
    justify-content: flex-start;
    gap: 3px;
    white-space: nowrap;
}

.small .caret {
    margin-left: 2px;
}

.big {
    flex-direction: column;
    justify-content: flex-start;
    width: 43px;
    line-height: 13px;
    white-space: nowrap;
}

.big svg {
    width: 30px;
    height: 30px;
    margin-bottom: 5px;
}

.big > .caret {
    margin: 5px 0 0;
}

.big span {
    display: flex;
    align-items: center;
}

.forward {
    width: 50px;
}

.forward + .stack {
    margin-left: 1px;
}

.group-move .big {
    width: 44px;
}

.group-tags .tools {
    padding-left: 5px;
}

.categorize {
    width: 60px;
}

.group-editing .big {
    width: 48px;
    margin-right: 4px;
}

.glyph-latin {
    font: bold 24px 'Liberation Serif', serif;
    fill: #444;
}

.glyph-kana {
    font: bold 18px 'Noto Sans CJK JP', sans-serif;
    fill: #333;
}

.group-editing .big svg,
.social svg {
    overflow: visible;
}

.gallery {
    display: flex;
    height: 60px;
    margin: 5px 6px 0 5px;
    border: 1px solid #b9bfc8;
    background: #fff;
}

.gallery-list {
    flex: 1;
    display: grid;
    grid-template-columns: 120px 1fr;
    padding-left: 3px;
}

.gallery-list .small {
    gap: 5px;
}

.gallery-scroll {
    display: flex;
    flex-direction: column;
    width: 14px;
    border-left: 1px solid #cdd1d8;
}

.gallery-scroll button {
    flex: 1;
}

.gallery-scroll .caret {
    margin: 0;
}

.gallery-scroll .off {
    border-bottom: 1px solid #b9bfc8;
    opacity: .5;
}

.gallery-scroll svg,
.launcher svg {
    width: 8px;
    height: 8px;
}

.launcher {
    position: absolute;
    right: 4px;
    bottom: 3px;
}

/* addresses */

.envelope {
    display: flex;
    justify-content: space-between;
    padding: 7px 8px 1px 6px;
    box-shadow: inset 0 2px 1px #d3d6dc;
}

.envelope dl {
    display: grid;
    grid-template-columns: 77px auto;
    grid-auto-rows: 17px;
}

.sent span {
    margin-right: 8px;
}

/* message body */

.message {
    position: relative;
    flex: 1;
    min-height: 0;
    display: flex;
    margin: 0 6px;
    border: 1px solid #a2a9b4;
    background: #fff;
}

.mail {
    flex: 1;
    overflow: hidden;
    padding: 15px 10px 0;
    font: 14px/18px Lato, 'Open Sans', sans-serif;
    font-variant-ligatures: none;
    color: #1f497d;
}

.mail p {
    margin-bottom: 18px;
}

.mail a {
    color: #00e;
}

.mail .signature {
    margin: 36px 0 18px;
    font: bold 15px/18px 'Liberation Sans', Arial, sans-serif;
    color: #0f6cb6;
}

.quoted-header {
    margin-bottom: 17px;
    padding-top: 5px;
    border-top: 1px solid #b5c4df;
    background: linear-gradient(#f9fafc, #fff);
    font: 13px/16px 'DejaVu Sans Condensed', 'DejaVu Sans', sans-serif;
    color: #000;
}

.mail .site {
    font-weight: bold;
}

.social {
    display: flex;
    gap: 12px;
    margin-bottom: 22px;
}

.social svg {
    width: 36px;
    height: 36px;
}

.fb-mark {
    font: bold 40px 'Liberation Sans', Arial, sans-serif;
    fill: #fff;
}

.mail .green {
    margin-bottom: 16px;
    color: #4f6228;
}

.mail .company {
    margin-bottom: 16px;
    font-size: 11px;
}

.jump {
    position: absolute;
    top: 0;
    right: 33px;
    display: flex;
    gap: 6px;
    line-height: 15px;
}

.jump button {
    justify-content: flex-start;
    width: 56px;
    height: 18px;
    padding: 0 0 1px 1px;
    border: 1px solid #a9afb9;
    background: linear-gradient(#e9ebef, #d9dde4);
}

.jump svg {
    width: 9px;
    height: 9px;
}

.scrollbar {
    display: flex;
    flex-direction: column;
    align-items: center;
    width: 17px;
    background: #f1f1f2;
}

.split {
    width: 9px;
    height: 2px;
    margin: 2px 0 3px;
    background: #70757f;
}

.page-mark {
    width: 14px;
    height: 16px;
}

.scrollbar button,
.thumb {
    width: 15px;
    border: 1px solid #a9adb5;
    border-radius: 2px;
    background: linear-gradient(90deg, #f6f6f6, #e2e3e5);
}

.scrollbar button {
    height: 17px;
}

.scrollbar button svg {
    width: 8px;
    height: 8px;
}

.thumb {
    flex: 366;
    display: flex;
    align-items: center;
    justify-content: center;
}

.thumb i {
    width: 8px;
    height: 7px;
    background: repeating-linear-gradient(#777 0 1px, transparent 1px 2px);
}

.track {
    flex: 357;
}

.splitter {
    height: 5px;
    margin: 7px 6px 0;
    border: 1px solid #a2a9b4;
}

/* people pane */

.people {
    display: flex;
    align-items: center;
    height: 36px;
    padding: 0 10px 2px 19px;
    background: #f1f3f5;
    color: #111;
}

.people p {
    flex: 1;
    margin-left: 13px;
}

.info-mark {
    font: bold 11px 'Liberation Serif', serif;
    text-anchor: middle;
    fill: #fff;
}

.faces {
    display: flex;
    gap: 2px;
    margin-right: 14px;
}

.faces svg {
    width: 26px;
    height: 26px;
    border: 1px solid #808080;
    background: linear-gradient(#c6c6c6, #ececec);
}

.people button svg {
    width: 10px;
    height: 10px;
}

/* taskbar */

.taskbar {
    position: relative;
    display: flex;
    align-items: stretch;
    height: 40px;
    border-top: 1px solid #1d3b5c;
    background: linear-gradient(90deg, #17568f, #2c7db5 8%, #3f9bcd 17%, #54add9 27%, #3a9ad0 40%, #2a83c6 55%, #1f6cb4 68%, #1c5ba2 82%, #1d4a80 87%, #183a66);
}

.taskbar > * {
    position: relative;
}

.taskbar > .streaks {
    position: absolute;
    width: 100%;
    height: 100%;
}

.start {
    width: 54px;
}

.start svg {
    width: 38px;
    height: 38px;
}

.pin,
.task {
    width: 58px;
    margin-right: 4px;
}

.pin:nth-of-type(2) {
    margin-left: 5px;
}

.pin svg,
.task svg {
    width: 31px;
    height: 31px;
}

.task {
    border: 1px solid #174a70;
    border-radius: 3px;
    box-shadow: inset 0 0 0 1px #a5d8f0;
    background: linear-gradient(135deg, #a6d6ec88, #5fb0d855);
}

.current {
    width: 52px;
    margin-right: 11px;
    background: linear-gradient(#d8eef8, #9fd2ea);
    box-shadow: inset 0 0 0 1px #e4f5fc, 3px 0 0 #7fc0e0, 4px 0 0 #1f5a80, 7px 0 0 #6fb4d8;
}

.ie-mark {
    font: bold 42px 'Liberation Sans', Arial, sans-serif;
    text-anchor: middle;
    fill: #62c6f2;
}

.sage-mark {
    font: 15px 'Liberation Sans', Arial, sans-serif;
    text-anchor: middle;
    fill: #fff;
}

.tray {
    display: flex;
    align-items: center;
    gap: 8px;
    margin-left: auto;
}

.clock {
    width: 84px;
    margin-left: 4px;
    padding-top: 3px;
    line-height: 17px;
    text-align: center;
    color: #fff;
}

.desktop {
    width: 14px;
    border: 1px solid #7d95b3;
    background: linear-gradient(135deg, #5c7ba2, #1c3c66);
}
```
